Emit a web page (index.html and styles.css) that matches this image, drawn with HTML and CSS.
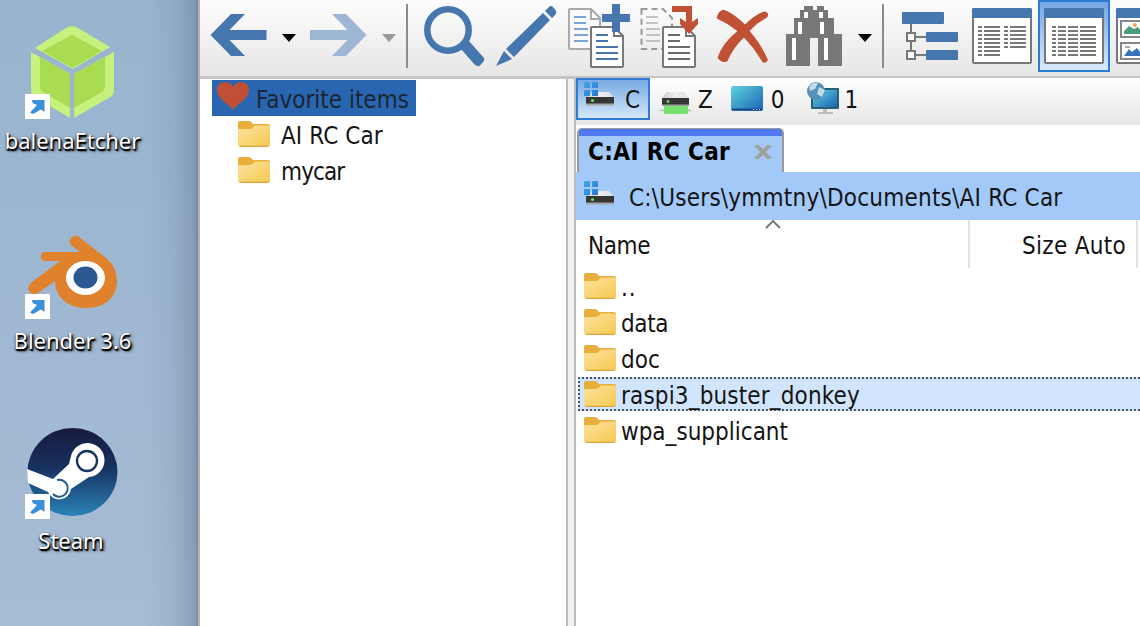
FILE: index.html
```html
<!DOCTYPE html>
<html lang="en">
<head>
<meta charset="utf-8">
<title>File manager</title>
<link rel="stylesheet" href="styles.css">
</head>
<body>
<svg width="0" height="0" class="defs">
  <defs>
    <linearGradient id="gold" x1="0" y1="0" x2="1" y2="1"><stop offset="0" stop-color="#fbe3a0"/><stop offset="1" stop-color="#f6c951"/></linearGradient>
    <linearGradient id="steamBg" x1="0" y1="0" x2="0" y2="1"><stop offset="0" stop-color="#171a3e"/><stop offset=".45" stop-color="#17315f"/><stop offset="1" stop-color="#2a83b8"/></linearGradient>
    <linearGradient id="screen" x1="0" y1="0" x2="1" y2="1"><stop offset="0" stop-color="#5fd3e0"/><stop offset="1" stop-color="#1c62b4"/></linearGradient>
    <linearGradient id="win" x1="0" y1="0" x2="1" y2="1"><stop offset="0" stop-color="#45a8e4"/><stop offset="1" stop-color="#2478d4"/></linearGradient>
    <linearGradient id="metal" x1="0" y1="0" x2="1" y2="0"><stop offset="0" stop-color="#cdcdcd"/><stop offset=".5" stop-color="#efefef"/><stop offset="1" stop-color="#dcdcdc"/></linearGradient>
    <symbol id="folder" viewBox="0 0 32 27">
      <path d="M0 3Q0 1 2 1H11Q13 1 14 3L15 4H30Q32 4 32 6V20H0Z" fill="#e9af3c"/>
      <path d="M0 10Q0 9 1.500 9H12Q14 9 15.500 7L17 5.500H30.500Q32 5.500 32 7V24Q32 26 30 26H2Q0 26 0 24Z" fill="url(#gold)"/>
      <path d="M1 25.500Q1.500 26.300 3 26.300H29Q31 26.300 31.500 25.200" fill="none" stroke="#dda13a" stroke-width="1.200"/>
    </symbol>
    <symbol id="drive" viewBox="0 0 32 26">
      <path d="M8 10H25L30 16H2Z" fill="url(#metal)"/>
      <rect x="2" y="15" width="28" height="7" fill="#363636"/><rect x="2" y="21.500" width="28" height="2" fill="#a5a5a5"/>
      <circle cx="8.500" cy="18.500" r="1.600" fill="#5de35d"/>
      <path d="M0 0H6V6H0ZM8 0H14V6H8ZM0 8H6V14H0ZM8 8H14V14H8Z" fill="url(#win)"/>
    </symbol>
    <symbol id="shortcut" viewBox="0 0 25 25">
      <rect width="25" height="25" fill="#fff"/>
      <path d="M7 6H19.500V18L16 15.500L8 20L5 18.500L12 11L7.500 9Z" fill="#3a8fdd"/>
    </symbol>
    <symbol id="down" viewBox="0 0 14 8"><path d="M0 0H14L7 8Z" fill="currentColor"/></symbol>
  </defs>
</svg>
<div class="screen">
  <aside class="desktop">
    <div class="launcher launcher-etcher">
      <svg width="120" height="100" viewBox="13 22 120 100">
        <path d="M35 48L66 28Q72 24 78 28L110 47L73 69Z" fill="#c8f07e"/><path d="M42 51L72 35L102 51L73 68Z" fill="#a9dc50"/>
        <path d="M31 52L70 74V118L33 96Q31 94 31 90Z" fill="#c8f07e"/><path d="M40 57L70 74V108L43 92Q40 90 40 87Z" fill="#a9dc50"/>
        <path d="M114 52L74 74V118L112 96Q114 94 114 90Z" fill="#c8f07e"/><path d="M105 57L74 74V108L102 92Q105 90 105 87Z" fill="#a9dc50"/>
        <use href="#shortcut" x="25" y="94" width="25" height="25"/>
      </svg>
      <span>balenaEtcher</span>
    </div>
    <div class="launcher launcher-blender">
      <svg width="120" height="100" viewBox="13 222 120 100">
        <path d="M29 291Q27 286 32 282L60 261H45Q41 261 41 256.500Q41 252 45 252H80L71 245Q68 241 71 238Q75 234 79 237L106 258Q117 267 117 281C117 298 104 308 86 308C68 308 55 297 55 281L38 293Q32 296 29 291Z" fill="#e0822b"/>
        <ellipse cx="85.500" cy="278" rx="19.500" ry="17" fill="#fff"/><ellipse cx="85.500" cy="277.500" rx="12" ry="11" fill="#2b5893"/>
        <use href="#shortcut" x="25" y="294" width="25" height="25"/>
      </svg>
      <span>Blender 3.6</span>
    </div>
    <div class="launcher launcher-steam">
      <svg width="120" height="100" viewBox="13 422 120 100">
        <ellipse cx="72.500" cy="472" rx="45" ry="44" fill="url(#steamBg)"/>
        <path d="M27 469L53 479L69 464L71 456A17 17 0 1 1 89 477L71 489A12 12 0 0 1 48 492L28 483Z" fill="#fff"/>
        <circle cx="87" cy="461" r="10" fill="#fff" stroke="#183560" stroke-width="2.300"/>
        <path d="M57 480A8.500 8.500 0 1 1 53 494" fill="none" stroke="#235b8f" stroke-width="2"/>
        <use href="#shortcut" x="25" y="494" width="25" height="25"/>
      </svg>
      <span>Steam</span>
    </div>
  </aside>

  <main class="window">
    <header class="toolbar">
      <svg class="back" width="58" height="72" viewBox="210 0 58 72"><path d="M210.500 35L231 14H245L229.500 30H266.500V40H229.500L245 56H231Z" fill="#4676ae"/></svg>
      <svg class="drop drop-back" width="14" height="8"><use href="#down"/></svg>
      <svg class="forward" width="58" height="72" viewBox="309 0 58 72"><path d="M366.500 35L346 14H332L347.500 30H310V40H347.500L332 56H346Z" fill="#9db6d3"/></svg>
      <svg class="drop drop-forward" width="14" height="8"><use href="#down"/></svg>
      <i class="divider divider-nav"></i>
      <svg class="search" width="62" height="72" viewBox="423 0 62 72"><circle cx="448" cy="30" r="20.700" fill="none" stroke="#4676ae" stroke-width="6.500"/><path d="M461 49L469 41L484 58Q485 60 483 62L480 65.500Q478 67 475 65Z" fill="#4676ae"/></svg>
      <svg class="edit" width="62" height="72" viewBox="495 0 62 72"><path d="M545 11L549 7Q551 5 553 7L556 11Q557 13 555 15L552 18ZM543 13L550 20L514 57L506 49ZM504 51L512 59L496 66Z" fill="#4676ae"/></svg>
      <svg class="copy" width="64" height="72" viewBox="568 0 64 72">
        <path d="M570 9H591L600 18V49H570Q569 49 569 48V10Q569 9 570 9Z" fill="#fafafa" stroke="#aaa" stroke-width="2"/><path d="M591 9V19H600" fill="none" stroke="#aaa" stroke-width="2"/>
        <path d="M574 17H586M574 23H586M574 29H588M574 35H588M574 41H588" stroke="#78a6d9" stroke-width="2"/>
        <path d="M592 27H614L623 36V66Q623 67 622 67H592Q591 67 591 66V28Q591 27 592 27Z" fill="#fff" stroke="#777" stroke-width="2"/><path d="M614 27V36H623" fill="none" stroke="#777" stroke-width="2"/>
        <path d="M596 35H608M596 41H608M596 47H618M596 53H618M596 59H618" stroke="#4676ae" stroke-width="2"/>
        <path d="M612 4H620V14H630V22H620V32H612V22H602V14H612Z" fill="#4676ae"/>
      </svg>
      <svg class="move" width="60" height="72" viewBox="640 0 60 72">
        <path d="M641.500 9H663L672 18V49H641.500Z" fill="none" stroke="#999" stroke-width="2" stroke-dasharray="6 4"/>
        <path d="M646 17H658M646 23H658M646 29H660M646 35H660M646 41H660" stroke="#c2c2c2" stroke-width="2"/>
        <path d="M664 27H686L695 36V66Q695 67 694 67H664Q663 67 663 66V28Q663 27 664 27Z" fill="#fff" stroke="#777" stroke-width="2"/><path d="M686 27V36H695" fill="none" stroke="#777" stroke-width="2"/>
        <path d="M668 35H680M668 41H680M668 47H690M668 53H690M668 59H690" stroke="#6b6b6b" stroke-width="2"/>
        <path d="M672 6H692V22L698 18V24L689 34L680 24V18L686 22V12H672Z" fill="#c15135"/>
      </svg>
      <svg class="delete" width="54" height="72" viewBox="716 0 54 72"><path d="M717 18Q718 12 723 10Q733 13 745 25Q755 15 764 12Q769 12 767 17Q757 22 749 31Q760 43 767.500 60Q766 63 763 62Q754 47 744 37Q733 47 727 61Q722 63 718 58Q722 44 738 31Q728 23 717 18Z" fill="#c15135" stroke="#c15135" stroke-width="1"/></svg>
      <svg class="find" width="58" height="72" viewBox="785 0 58 72"><path d="M800 10H804V6H813V10H817V6H824V10H828V18H834V34H842V66H818V38H810V66H786V34H794V18H800Z" fill="#777"/><path d="M804 12H808V18H804ZM819 12H823V18H819ZM798 22H802V34H798ZM820 22H824V34H820ZM792 38H796V60H792ZM824 38H828V60H824Z" fill="#fff"/></svg>
      <svg class="drop drop-find" width="14" height="8"><use href="#down"/></svg>
      <i class="divider divider-find"></i>
      <svg class="tree-view" width="58" height="72" viewBox="901 0 58 72"><path d="M911 24V55M911 37H928M911 55H928" stroke="#777" stroke-width="2"/><rect x="902" y="12" width="42" height="12" rx="1" fill="#4676ae"/><rect x="926" y="32" width="32" height="10" rx="1" fill="#4676ae"/><rect x="926" y="50" width="32" height="10" rx="1" fill="#4676ae"/><path d="M907 33H915V41H907ZM907 51H915V59H907Z" fill="#fff" stroke="#777" stroke-width="2"/></svg>
      <svg class="brief-view" width="60" height="72" viewBox="972 0 60 72"><rect x="973" y="9" width="58" height="54" rx="1" fill="#fff" stroke="#777" stroke-width="2"/><path d="M972 18V10Q972 8 974 8H1030Q1032 8 1032 10V18Z" fill="#4676ae"/><path d="M978 27H982M978 31H982M978 35H982M978 39H982M978 43H982M978 47H982M978 51H982M978 55H982M984 27H1000M984 31H1000M984 35H1000M984 39H1000M984 43H1000M984 47H1000M984 51H1000M984 55H1000M1004 27H1008M1004 31H1008M1004 35H1008M1004 39H1008M1004 43H1008M1004 47H1008M1010 27H1026M1010 31H1026M1010 35H1026M1010 39H1026M1010 43H1026M1010 47H1026" fill="none" stroke="#777" stroke-width="2"/></svg>
      <div class="view-active"><svg width="60" height="72" viewBox="1044 0 60 72"><rect x="1045" y="9" width="58" height="54" rx="1" fill="#fff" stroke="#777" stroke-width="2"/><path d="M1044 18V10Q1044 8 1046 8H1102Q1104 8 1104 10V18Z" fill="#4676ae"/><path d="M1052 27H1056M1058 27H1066M1068 27H1078M1080 27H1096M1052 31H1056M1058 31H1066M1068 31H1078M1080 31H1096M1052 35H1056M1058 35H1066M1068 35H1078M1080 35H1096M1052 39H1056M1058 39H1066M1068 39H1078M1080 39H1096M1052 43H1056M1058 43H1066M1068 43H1078M1080 43H1096M1052 47H1056M1058 47H1066M1068 47H1078M1080 47H1096M1052 51H1056M1058 51H1066M1068 51H1078M1080 51H1096M1052 55H1056M1058 55H1066M1068 55H1078M1080 55H1096" stroke="#777" stroke-width="2"/></svg></div>
      <svg class="thumb-view" width="60" height="72" viewBox="1116 0 60 72"><rect x="1117" y="9" width="58" height="54" rx="1" fill="#fff" stroke="#777" stroke-width="2"/><path d="M1116 18V10Q1116 8 1118 8H1176V18Z" fill="#4676ae"/><path d="M1121 21H1146V37H1121ZM1121 43H1146V59H1121Z" fill="#fff" stroke="#888" stroke-width="2"/><path d="M1124 34V31L1129 26L1134 29L1138 27L1143 34Z" fill="#4a9d78"/><circle cx="1135" cy="25" r="2" fill="#f3a34c"/><path d="M1124 56L1129 49L1132 52L1137 48L1143 56Z" fill="#3971b7"/><path d="M1125 47H1130" stroke="#aaa" stroke-width="2"/></svg>
    </header>
    <div class="panes">
      <nav class="favorites">
        <div class="fav-root"><svg width="32" height="28" viewBox="0 0 32 28"><path d="M16 28C12 22 0 17 0 8C0 -1 12 -3 16 5C20 -3 32 -1 32 8C32 17 20 22 16 28Z" fill="#bf5037"/></svg><span>Favorite items</span></div>
        <div class="fav-item"><svg class="folder"><use href="#folder"/></svg><span>AI RC Car</span></div>
        <div class="fav-item"><svg class="folder"><use href="#folder"/></svg><span class="fav-mycar">mycar</span></div>
      </nav>
      <div class="splitter"></div>
      <section class="browser">
        <div class="drives">
          <div class="drive drive-c"><svg width="32" height="26"><use href="#drive"/></svg><span>C</span></div>
          <div class="drive drive-z"><svg width="32" height="24" viewBox="0 0 32 24"><path d="M6 0H24L29 7H2Z" fill="url(#metal)"/><path d="M0 18.500H31" stroke="#a5c8a5" stroke-width="1.500"/><rect x="4" y="13" width="24" height="9" rx="1" fill="#75e06c"/><rect x="2" y="6" width="27" height="7" fill="#363636"/><rect x="2" y="12.500" width="27" height="1.500" fill="#a5a5a5"/><circle cx="8" cy="9.500" r="1.400" fill="#5de35d"/></svg><span>Z</span></div>
          <div class="drive drive-0"><svg width="32" height="26" viewBox="0 0 32 26"><rect width="32" height="25" rx="2" fill="url(#screen)"/><path d="M1 23.500H31" stroke="#154984" stroke-width="2"/><path d="M22 23.500H30" stroke="#cce" stroke-width="1" stroke-dasharray="1 2"/></svg><span>0</span></div>
          <div class="drive drive-1"><svg width="34" height="33" viewBox="0 0 34 33"><path d="M16 26H20V30H26V32H11V30H16Z" fill="#b7bdc1"/><rect x="4" y="6" width="28" height="21" rx="1" fill="#266173"/><rect x="6" y="8" width="24" height="17" fill="url(#screen)"/><circle cx="9" cy="9" r="9" fill="#5690b4"/><path d="M2 5Q5 0 11 1L8 7L3 9ZM12 5L18 8L15 15L10 12Z" fill="#c1dce8"/></svg><span>1</span></div>
        </div>
        <div class="tabs"><div class="tab"><span>C:AI RC Car</span><svg width="18" height="14" viewBox="0 0 18 14"><path d="M2 0L16 14M16 0L2 14" stroke="#a1a1a1" stroke-width="4"/></svg></div></div>
        <div class="path"><svg width="32" height="26"><use href="#drive"/></svg><span>C:\Users\ymmtny\Documents\AI RC Car</span></div>
        <div class="columns">
          <div class="col-name"><span>Name</span><svg class="sort" width="16" height="9" viewBox="0 0 16 9"><path d="M1 8L8 1L15 8" fill="none" stroke="#777" stroke-width="2"/></svg></div>
          <div class="col-size"><span>Size Auto</span></div>
        </div>
        <div class="rows">
          <div class="row"><svg class="folder"><use href="#folder"/></svg><span class="up">..</span></div>
          <div class="row"><svg class="folder"><use href="#folder"/></svg><span class="data">data</span></div>
          <div class="row"><svg class="folder"><use href="#folder"/></svg><span>doc</span></div>
          <div class="row selected"><svg class="folder"><use href="#folder"/></svg><span>raspi3_buster_donkey</span></div>
          <div class="row"><svg class="folder"><use href="#folder"/></svg><span>wpa_supplicant</span></div>
        </div>
      </section>
    </div>
  </main>
</div>
</body>
</html>
```
FILE: styles.css
```css
* { box-sizing: border-box; }
body { margin: 0; overflow: hidden; font: 24px/36px "DejaVu Sans Condensed", "DejaVu Sans", sans-serif; font-stretch: condensed; color: #141414; }
span { white-space: nowrap; }
svg { display: block; flex: none; }
.defs { position: absolute; }
.screen { display: flex; width: 1140px; height: 626px; overflow: hidden; }
.desktop { width: 198px; flex: none; background: linear-gradient(90deg, transparent 73%, rgba(80,105,130,.12) 88%, rgba(75,95,115,.3) 98%, rgba(70,88,105,.48)), linear-gradient(#98b4cf, #a7bcd5); }
.launcher { display: flex; flex-direction: column; align-items: center; width: 146px; height: 200px; }
.launcher-etcher { margin-top: 22px; }
.launcher span { margin-left: -1px; font: 22px/36px "Noto Sans", sans-serif; color: #fff; text-shadow: 1px 2px 1px #000, 0 1px 2px #000, 2px 2px 3px #111; }
.launcher-steam span { margin-left: -4px; }
.window { display: flex; flex-direction: column; flex: 1; min-width: 0; border-left: 2px solid #b3b3b3; background: #fff; }
.toolbar { display: flex; flex: none; height: 79px; border-bottom: 3px solid #c4c4c4; background: linear-gradient(#fdfdfd, #e6e6e6); overflow: hidden; }
.drop { margin-top: 34px; color: #000; }
.back { margin-left: 10px; }
.drop-back { margin-left: 14px; }
.forward { margin-left: 13px; }
.drop-forward { margin-left: 15px; color: #999; }
.divider { flex: none; width: 2px; height: 64px; margin-top: 4px; background: #8b8b8b; }
.divider-nav { margin-left: 10px; }
.search { margin-left: 15px; }
.edit { margin-left: 10px; }
.copy { margin-left: 11px; }
.move { margin-left: 8px; }
.delete { margin-left: 16px; }
.find { margin-left: 15px; }
.drop-find { margin-left: 15px; }
.divider-find { margin-left: 10px; }
.tree-view { margin-left: 17px; }
.brief-view { margin-left: 13px; }
.view-active { flex: none; width: 72px; height: 72px; margin-left: 6px; padding: 0 4px; border: 2px solid #2c7cd6; background: linear-gradient(#74a6e2, #d9eafc); }
.view-active svg { margin-top: -2px; }
.thumb-view { margin-left: 6px; }
.panes { display: flex; flex: 1; min-height: 0; }
.favorites { width: 366px; flex: none; padding: 1px 0 0 12px; }
.fav-root { display: flex; align-items: flex-start; width: 204px; height: 36px; padding: 2px 0 0 5px; background: #2866b2; color: #1c2530; }
.fav-root span { margin-left: 7px; }
.fav-item { display: flex; align-items: center; height: 36px; padding-left: 26px; }
.fav-item .folder { margin-top: -2px; }
.fav-item span { margin: 3px 0 0 11px; letter-spacing: .1px; }
.fav-item .fav-mycar { letter-spacing: -.9px; }
.folder { width: 32px; height: 27px; }
.splitter { width: 10px; flex: none; border: solid #bdbdbd; border-width: 0 2px; background: #f1f1f1; }
.browser { flex: 1; min-width: 0; }
.drives { display: flex; height: 47px; margin-top: -1px; background: linear-gradient(#fff, #e6e6e6); }
.drive { display: flex; align-items: flex-start; }
.drive span { margin-top: 4px; }
.drive-c { width: 74px; height: 42px; padding: 2px 6px; border: 2px solid #2c7cd6; background: linear-gradient(#78aae3, #d3e6fa); }
.drive-c span { margin: 0 0 0 9px; }
.drive-z { margin-left: 10px; }
.drive-z svg { margin-top: 14px; }
.drive-z span { margin-left: 6px; }
.drive-0 { margin-left: 18px; }
.drive-0 svg { margin-top: 8px; }
.drive-0 span { margin-left: 8px; }
.drive-1 { margin-left: 22px; }
.drive-1 svg { margin-top: 4px; }
.drive-1 span { margin-left: 4px; }
.tabs { height: 47px; padding: 3px 0 0 1px; }
.tab { display: flex; align-items: center; width: 207px; height: 44px; padding: 2px 10px 0 9px; border: solid #9a9a9a; border-width: 1px 2px 0; border-radius: 5px 5px 0 0; background: linear-gradient(#5079f0 7px, #a2c9f8 7px); font-weight: bold; letter-spacing: .4px; color: #000; }
.tab svg { margin-left: auto; }
.path { display: flex; align-items: center; height: 48px; padding-left: 8px; background: #a2c9f8; }
.path svg { margin-top: -5px; }
.path span { margin: 3px 0 0 13px; letter-spacing: .22px; }
.columns { display: flex; height: 48px; }
.col-name { position: relative; width: 394px; padding: 8px 12px; border-right: 2px solid #e3e3e3; letter-spacing: -.4px; }
.sort { position: absolute; left: 189px; top: 0; }
.col-size { width: 168px; padding: 8px 10px 0 0; border-right: 2px solid #e3e3e3; text-align: right; letter-spacing: .3px; }
.row { display: flex; align-items: center; height: 36px; padding-left: 8px; }
.row .folder { margin-top: -2px; }
.row span { margin: 3px 0 0 5px; }
.row .up { letter-spacing: .8px; }
.row .data { letter-spacing: -.4px; }
.selected { height: 34px; margin: 1px -4px 1px 2px; padding-left: 4px; border: 2px dotted #4c5460; background: #d0e5fc; letter-spacing: .15px; }
```
